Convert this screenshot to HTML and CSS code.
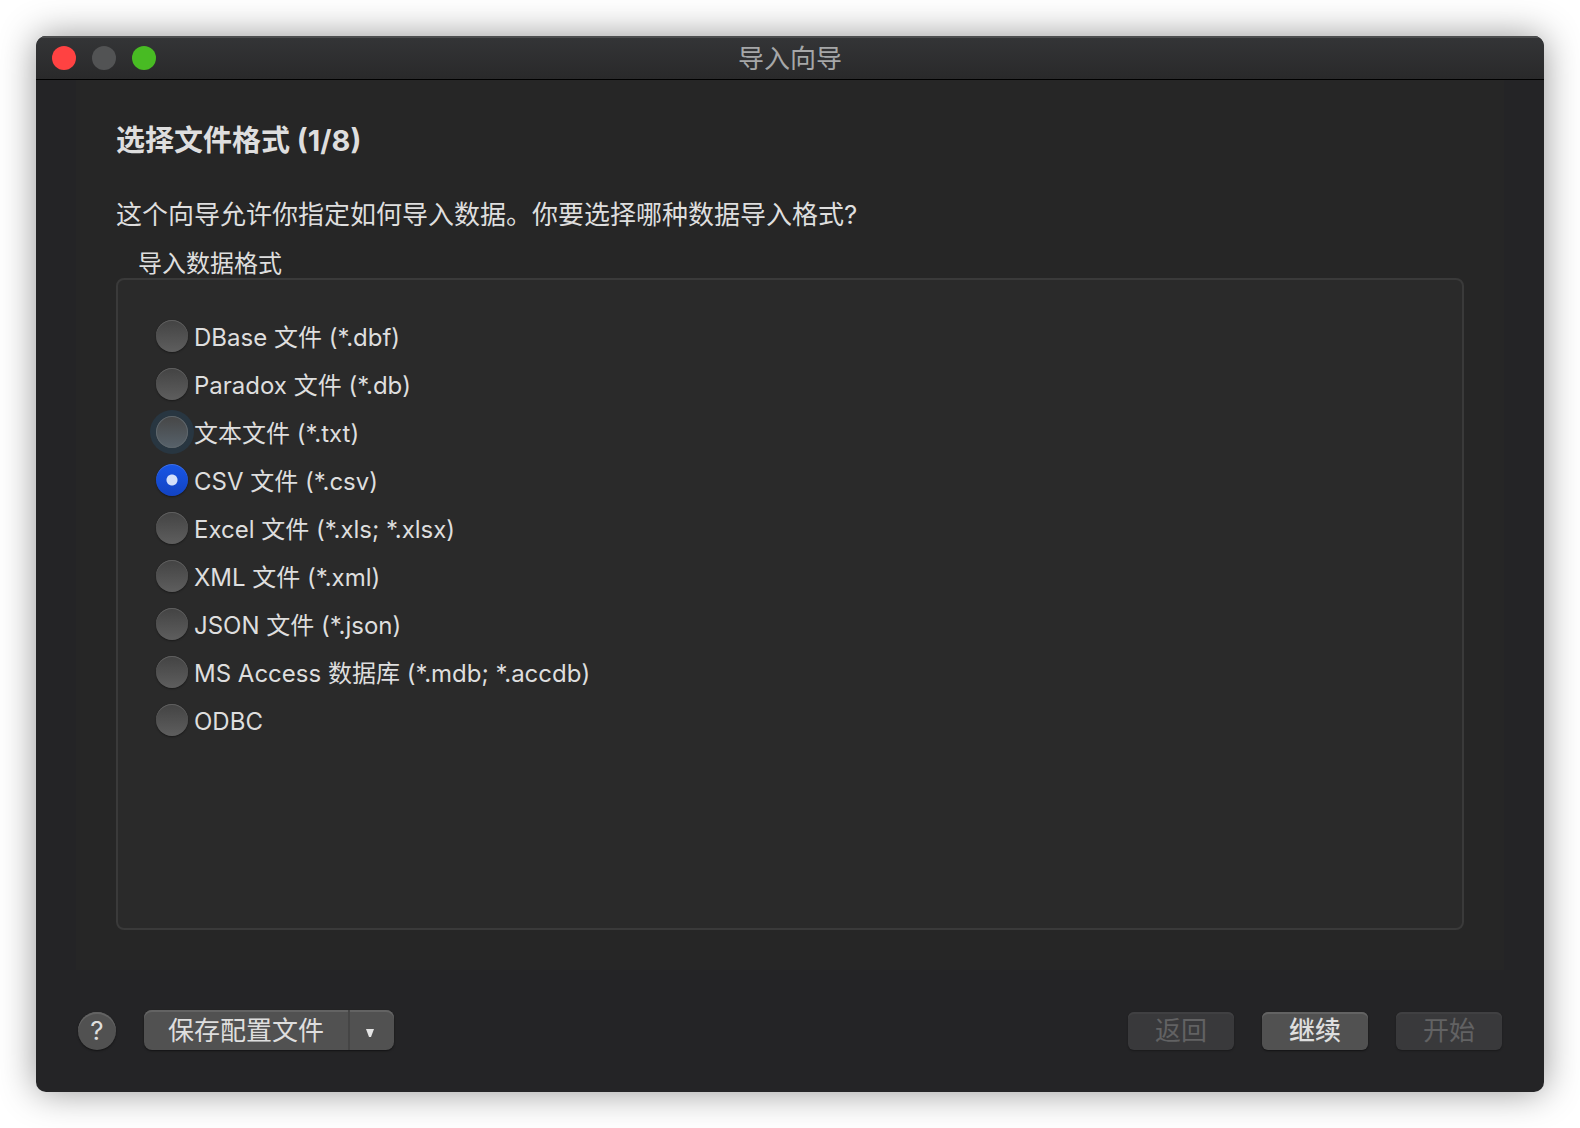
FILE: index.html
```html
<!DOCTYPE html>
<html lang="zh-CN">
<head>
<meta charset="utf-8">
<meta name="viewport" content="width=device-width, initial-scale=1">
<title>导入向导</title>
<link rel="stylesheet" href="styles.css">
</head>
<body>
<form class="window">
  <header class="titlebar">
    <div class="lights">
      <button type="button" class="light light-close" aria-label="关闭"></button>
      <button type="button" class="light" aria-label="最小化" disabled></button>
      <button type="button" class="light light-zoom" aria-label="缩放"></button>
    </div>
    <span class="title">导入向导</span>
  </header>
  <main class="panel">
    <h1 class="heading">选择文件格式 (1/8)</h1>
    <p class="intro">这个向导允许你指定如何导入数据。你要选择哪种数据导入格式?</p>
    <fieldset class="formats">
      <legend class="formats-title">导入数据格式</legend>
      <div class="formats-box">
        <label class="option"><input type="radio" name="format" class="radio"><span class="option-text">DBase 文件 (*.dbf)</span></label>
        <label class="option"><input type="radio" name="format" class="radio"><span class="option-text">Paradox 文件 (*.db)</span></label>
        <label class="option"><input type="radio" name="format" class="radio radio-ring"><span class="option-text">文本文件 (*.txt)</span></label>
        <label class="option"><input type="radio" name="format" class="radio" checked><span class="option-text">CSV 文件 (*.csv)</span></label>
        <label class="option"><input type="radio" name="format" class="radio"><span class="option-text">Excel 文件 (*.xls; *.xlsx)</span></label>
        <label class="option"><input type="radio" name="format" class="radio"><span class="option-text">XML 文件 (*.xml)</span></label>
        <label class="option"><input type="radio" name="format" class="radio"><span class="option-text">JSON 文件 (*.json)</span></label>
        <label class="option"><input type="radio" name="format" class="radio"><span class="option-text">MS Access 数据库 (*.mdb; *.accdb)</span></label>
        <label class="option"><input type="radio" name="format" class="radio"><span class="option-text">ODBC</span></label>
      </div>
    </fieldset>
  </main>
  <footer class="footer">
    <button type="button" class="help" aria-label="帮助">?</button>
    <div class="split">
      <button type="button" class="split-main">保存配置文件</button>
      <button type="button" class="split-menu" aria-label="更多选项"><svg width="8" height="8" viewBox="0 0 8 8" aria-hidden="true"><path d="M0 0H8L5 8H3Z" fill="#e4e4e4"/></svg></button>
    </div>
    <div class="nav">
      <button type="button" class="button" disabled>返回</button>
      <button type="button" class="button button-default">继续</button>
      <button type="button" class="button" disabled>开始</button>
    </div>
  </footer>
</form>
</body>
</html>
```

FILE: styles.css
```css
* {
  box-sizing: border-box;
}

body {
  margin: 0;
  min-height: 100vh;
  padding: 36px;
  display: flex;
  background: #fff;
  color: #dedede;
  font-family: Inter, "Noto Sans CJK SC", sans-serif;
  font-size: 24px;
}

button {
  margin: 0;
  padding: 0;
  border: 0;
  color: inherit;
  font: inherit;
}

.window {
  flex: 1;
  min-width: 0;
  display: flex;
  flex-direction: column;
  border-radius: 10px;
  overflow: hidden;
  background: #242426;
  box-shadow: 0 0 36px rgba(0, 0, 0, 0.42);
}

/* Title bar */
.titlebar {
  height: 44px;
  display: grid;
  grid-template-columns: 1fr auto 1fr;
  align-items: center;
  padding: 0 16px;
  border-bottom: 1px solid #000;
  background: linear-gradient(#343537, #29292a);
  box-shadow: inset 0 2px #4c4d4e;
}

.lights {
  display: flex;
  gap: 16px;
}

.light {
  width: 24px;
  height: 24px;
  border-radius: 50%;
  background: #525354;
}

.light-close {
  background: #ff4242;
}

.light-zoom {
  background: #48bb23;
}

.title {
  padding-top: 2px;
  color: #a6a7a8;
  font-size: 26px;
  line-height: 40px;
}

/* Wizard page */
.panel {
  flex: 1;
  display: flex;
  flex-direction: column;
  margin: 0 40px;
  padding: 40px;
  background: #262626;
}

.heading {
  margin: 0 0 32px;
  font-size: 29px;
  font-weight: 700;
  line-height: 42px;
}

.intro {
  margin: 0 0 14px;
  font-size: 26px;
  line-height: 42px;
}

.formats {
  flex: 1;
  display: flex;
  flex-direction: column;
  min-width: 0;
  margin: 0;
  padding: 0;
  border: 0;
}

.formats-title {
  padding: 0 22px;
  line-height: 28px;
}

.formats-box {
  flex: 1;
  display: flex;
  flex-direction: column;
  gap: 16px;
  padding: 40px 38px;
  border: 2px solid #3a3a3a;
  border-radius: 8px;
  background: #2a2a2a;
}

.option {
  display: flex;
  align-items: center;
  align-self: flex-start;
  gap: 6px;
  line-height: 28px;
}

.option-text {
  padding-top: 4px;
}

.radio {
  appearance: none;
  width: 32px;
  height: 32px;
  margin: 0;
  border-radius: 50%;
  background: linear-gradient(#434343, #5e5e5e);
  box-shadow: inset 0 1px #606060, 0 1px 2px rgba(0, 0, 0, 0.4);
}

.radio:checked {
  background: radial-gradient(circle, #d3e0fa 5px, transparent 6px), linear-gradient(#1856e6, #1243c2);
  box-shadow: inset 0 1px #4272e4, 0 1px 2px rgba(0, 0, 0, 0.4);
}

.radio-ring {
  background: linear-gradient(#464646, #57626b);
  box-shadow: inset 0 0 0 1px #5d666c, 0 0 0 6px #283641;
}

/* Footer */
.footer {
  display: flex;
  align-items: flex-end;
  padding: 40px 42px 42px;
  font-size: 26px;
}

.help,
.split,
.button-default {
  background: #515151;
  box-shadow: inset 0 2px #636363, 0 1px 2px rgba(0, 0, 0, 0.5);
}

.help {
  width: 38px;
  height: 38px;
  margin-right: 28px;
  border-radius: 50%;
  line-height: 38px;
}

.split {
  display: flex;
  height: 40px;
  border-radius: 8px;
}

.split-main,
.split-menu {
  background: transparent;
}

.split-main {
  width: 204px;
  padding-top: 2px;
  line-height: 38px;
}

.split-menu {
  display: flex;
  align-items: center;
  justify-content: center;
  width: 46px;
  padding: 6px 4px 0 0;
  border-left: 2px solid #454545;
}

.nav {
  display: flex;
  gap: 28px;
  margin-left: auto;
}

.button {
  width: 106px;
  height: 38px;
  border-radius: 6px;
  line-height: 38px;
}

.button:disabled {
  background: #39393b;
  color: #626263;
  box-shadow: inset 0 2px #404042, 0 1px 2px rgba(0, 0, 0, 0.3);
}

.button-default {
  font-weight: 500;
}
```
